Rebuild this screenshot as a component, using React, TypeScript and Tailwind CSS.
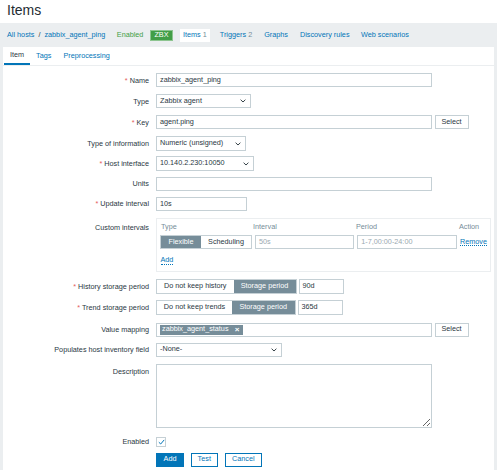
import React from 'react';

const font = { fontFamily: '"Liberation Sans", Arial, sans-serif' };

const box = 'h-[14.4px] border border-[#c5d0d5] bg-white flex items-center px-[3px] box-border';

const Chevron: React.FC = () => (
  <svg width="6" height="4" viewBox="0 0 6 4" className="ml-auto shrink-0">
    <path d="M0.6 0.7 L3 3 L5.4 0.7" fill="none" stroke="#1f2c33" strokeWidth="0.9" />
  </svg>
);

const Row: React.FC<{
  label: string;
  required?: boolean;
  className: string;
  top?: boolean;
  labelClass?: string;
  children: React.ReactNode;
}> = ({ label, required, className, top, labelClass, children }) => (
  <div className={`flex ${top ? 'items-start' : 'items-center'} ${className}`}>
    <div className={`w-[146px] shrink-0 text-right leading-none ${labelClass || ''}`}>
      {required && <span className="text-[#e45959] mr-[2px]">*</span>}
      {label}
    </div>
    <div className="ml-[7px] flex items-center">{children}</div>
  </div>
);

const SelectBtn: React.FC = () => (
  <div className="ml-[3px] w-[34px] h-[14.4px] border border-[#c5d0d5] bg-white flex items-center justify-center box-border">
    Select
  </div>
);

const App: React.FC = () => {
  return (
    <div style={font} className="w-[497px] h-[470px] overflow-hidden bg-white text-[7.25px] text-[#2a383f] flex flex-col">
      {/* title */}
      <div className="h-[23px] shrink-0 pl-[7px] pt-[2px] text-[14px] leading-[17px] text-[#1f2c33]">Items</div>

      {/* breadcrumbs / navigation */}
      <div className="h-[24px] shrink-0 bg-[#ebeef0] flex items-center pl-[7px] whitespace-nowrap">
        <span className="text-[#0275b8]">All hosts</span>
        <span className="ml-[4px]">/</span>
        <span className="ml-[4px] text-[#0275b8]">zabbix_agent_ping</span>
        <span className="ml-[11.5px] text-[#429e47]">Enabled</span>
        <span className="ml-[7px] h-[11px] px-[3px] bg-[#429e47] text-white flex items-center border border-white/40">ZBX</span>
        <span className="ml-[7px] h-[13px] px-[3.5px] bg-white flex items-center">
          <span className="text-[#0275b8]">Items</span>
          <span className="ml-[2px] text-[#768d99]">1</span>
        </span>
        <span className="ml-[9.5px] text-[#0275b8]">Triggers</span>
        <span className="ml-[2px] text-[#768d99]">2</span>
        <span className="ml-[12px] text-[#0275b8]">Graphs</span>
        <span className="ml-[12px] text-[#0275b8]">Discovery rules</span>
        <span className="ml-[11.5px] text-[#0275b8]">Web scenarios</span>
      </div>

      <div className="flex-1 flex bg-[#ebeef0]">
        <div className="ml-[3px] mr-[3px] flex-1 bg-white flex flex-col">
          {/* tabs */}
          <div className="h-[19px] shrink-0 flex items-stretch border-b border-[#ebeef0] pl-[1px]">
            <div className="px-[6px] flex items-center border-b-2 border-[#0275b8]">Item</div>
            <div className="px-[6px] flex items-center text-[#0275b8]">Tags</div>
            <div className="px-[6px] flex items-center text-[#0275b8]">Preprocessing</div>
          </div>

          <Row label="Name" required className="mt-[7px]">
            <div className={`${box} w-[275.5px]`}>zabbix_agent_ping</div>
          </Row>
          <Row label="Type" className="mt-[6.6px]">
            <div className={`${box} w-[95px] pr-[4px]`}>
              Zabbix agent
              <Chevron />
            </div>
          </Row>
          <Row label="Key" required className="mt-[6.6px]">
            <div className={`${box} w-[275.5px]`}>agent.ping</div>
            <SelectBtn />
          </Row>
          <Row label="Type of information" className="mt-[7px]">
            <div className={`${box} w-[90px] pr-[4px]`}>
              Numeric (unsigned)
              <Chevron />
            </div>
          </Row>
          <Row label="Host interface" required className="mt-[5.6px]">
            <div className={`${box} w-[98px] pr-[4px]`}>
              10.140.2.230:10050
              <Chevron />
            </div>
          </Row>
          <Row label="Units" className="mt-[6.2px]">
            <div className={`${box} w-[275.5px]`}></div>
          </Row>
          <Row label="Update interval" required className="mt-[5.6px]">
            <div className={`${box} w-[91px]`}>10s</div>
          </Row>

          {/* custom intervals */}
          <div className="flex items-start mt-[6.6px]">
            <div className="w-[146px] shrink-0 text-right leading-none pt-[6px]">Custom intervals</div>
            <div className="ml-[7px] w-[335px] h-[54.4px] border border-[#ebeef0] px-[3px] box-border flex flex-col">
              <div className="flex items-center h-[16px] pt-[2px] text-[#768d99]">
                <span className="w-[93px] pl-[1px]">Type</span>
                <span className="w-[103px]">Interval</span>
                <span className="w-[103px]">Period</span>
                <span>Action</span>
              </div>
              <div className="flex items-center h-[14.6px]">
                <div className="flex h-full border border-[#c5d0d5] box-border">
                  <div className="w-[40px] bg-[#768d99] text-white flex items-center justify-center">Flexible</div>
                  <div className="w-[50px] bg-white flex items-center justify-center">Scheduling</div>
                </div>
                <div className={`${box} ml-[3px] w-[99.5px] h-full text-[#9aa9b0]`}>50s</div>
                <div className={`${box} ml-[3.5px] w-[100px] h-full text-[#9aa9b0]`}>1-7,00:00-24:00</div>
                <span className="ml-[3.5px] text-[#0275b8] border-b border-dotted border-[#0275b8] leading-none">Remove</span>
              </div>
              <div className="mt-[5.5px] pl-[0.5px]">
                <span className="text-[#0275b8] border-b border-dotted border-[#0275b8] leading-none">Add</span>
              </div>
            </div>
          </div>

          <Row label="History storage period" required className="mt-[6.8px]">
            <div className="flex h-[14.6px] border border-[#c5d0d5] box-border">
              <div className="w-[76.5px] bg-white flex items-center justify-center">Do not keep history</div>
              <div className="w-[62px] bg-[#768d99] text-white flex items-center justify-center">Storage period</div>
            </div>
            <div className={`${box} ml-[2px] w-[45.5px]`}>90d</div>
          </Row>
          <Row label="Trend storage period" required className="mt-[6.4px]">
            <div className="flex h-[14.6px] border border-[#c5d0d5] box-border">
              <div className="w-[75px] bg-white flex items-center justify-center">Do not keep trends</div>
              <div className="w-[62.5px] bg-[#768d99] text-white flex items-center justify-center">Storage period</div>
            </div>
            <div className={`${box} ml-[2px] w-[45px]`}>365d</div>
          </Row>
          <Row label="Value mapping" className="mt-[8px]">
            <div className={`${box} w-[275.5px] px-[1.5px]`}>
              <div className="h-[10.7px] w-[82.5px] bg-[#768d99] text-white flex items-center pl-[2px]">
                zabbix_agent_status
                <span className="ml-auto mr-[3px] text-[8px] font-bold leading-none">×</span>
              </div>
            </div>
            <SelectBtn />
          </Row>
          <Row label="Populates host inventory field" className="mt-[5.6px]">
            <div className={`${box} w-[125.7px] pr-[4px]`}>
              -None-
              <Chevron />
            </div>
          </Row>
          <Row label="Description" top labelClass="pt-[4px]" className="mt-[7.2px]">
            <textarea
              readOnly
              className="w-[275.5px] h-[64px] border border-[#c5d0d5] bg-white box-border outline-none resize"
            />
          </Row>
          <Row label="Enabled" className="mt-[6.2px] h-[14.4px]">
            <div className="w-[10px] h-[10px] border border-[#c5d0d5] bg-white flex items-center justify-center box-border">
              <svg width="7" height="6" viewBox="0 0 7 6">
                <path d="M0.8 3.2 L2.7 5 L6.2 0.9" fill="none" stroke="#0275b8" strokeWidth="1" />
              </svg>
            </div>
          </Row>
          <div className="flex items-center mt-[3.8px] ml-[153px]">
            <div className="w-[28px] h-[14px] bg-[#0275b8] border border-[#0275b8] text-white flex items-center justify-center box-border">Add</div>
            <div className="ml-[6.5px] w-[27.5px] h-[14px] bg-white border border-[#0275b8] text-[#0275b8] flex items-center justify-center box-border">Test</div>
            <div className="ml-[7px] w-[36.5px] h-[14px] bg-white border border-[#0275b8] text-[#0275b8] flex items-center justify-center box-border">Cancel</div>
          </div>
        </div>
      </div>
    </div>
  );
};

export default App;
